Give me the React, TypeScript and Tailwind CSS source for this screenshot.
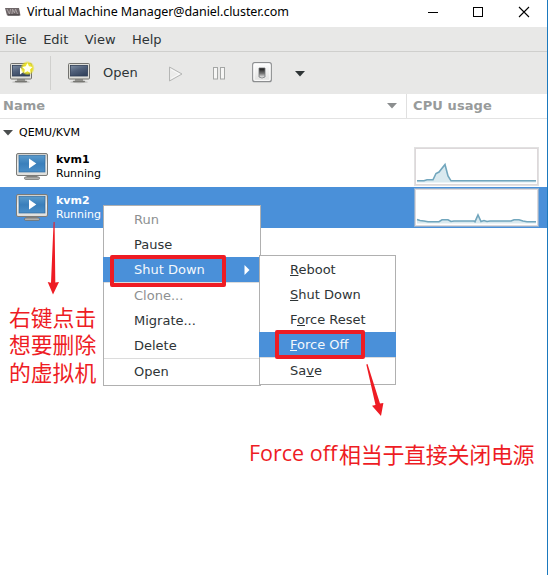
import type { ReactNode } from "react";

const VmIcon = () => (
  <svg width="34" height="28" viewBox="0 0 34 28" className="shrink-0">
    <defs>
      <linearGradient id="scr" x1="0" y1="0" x2="0" y2="1">
        <stop offset="0" stopColor="#5b9bcc" />
        <stop offset="0.5" stopColor="#3a7fbb" />
        <stop offset="1" stopColor="#4b8fc8" />
      </linearGradient>
      <linearGradient id="bezel" x1="0" y1="0" x2="0" y2="1">
        <stop offset="0" stopColor="#cfcfcc" />
        <stop offset="0.5" stopColor="#f1f1ef" />
        <stop offset="1" stopColor="#dededb" />
      </linearGradient>
    </defs>
    <path d="M12 22.5 H22 L23 24.5 H11 Z" fill="#8d8d89" />
    <rect x="9.5" y="24" width="15" height="2.4" rx="1.1" fill="#b8b8b4" stroke="#6b6b68" strokeWidth="0.8" />
    <rect x="1.5" y="0.5" width="31" height="22" rx="1.5" fill="url(#bezel)" stroke="#7b7b78" />
    <rect x="4" y="2.5" width="26" height="16.5" fill="url(#scr)" stroke="#2f6b9f" strokeWidth="0.7" />
    <path d="M14 5.5 L21.3 10.5 L14 15.5 Z" fill="#fff" />
  </svg>
);

const Monitor = ({ fresh = false }: { fresh?: boolean }) => (
  <svg width="26" height="24" viewBox="0 1 26 24" className="shrink-0">
    <defs>
      <linearGradient id="dark" x1="0" y1="0" x2="0.6" y2="1">
        <stop offset="0" stopColor="#8090a5" />
        <stop offset="0.5" stopColor="#50607a" />
        <stop offset="1" stopColor="#35455f" />
      </linearGradient>
      <radialGradient id="glow">
        <stop offset="0.3" stopColor="#f7ee24" />
        <stop offset="0.7" stopColor="#e9df24" stopOpacity="0.9" />
        <stop offset="1" stopColor="#e9e020" stopOpacity="0" />
      </radialGradient>
    </defs>
    <ellipse cx="12" cy="22" rx="9" ry="1.2" fill="#8f8f8b" opacity="0.45" />
    <path d="M8 19 H16 V21 H8 Z" fill="#9a9a96" />
    <rect x="6" y="20.7" width="12" height="1.6" rx="0.7" fill="#777773" />
    <rect x="1.5" y="3.5" width="21" height="15.5" rx="1" fill="#deded9" stroke="#72726f" />
    <rect x="3.5" y="5.5" width="17" height="10.5" fill="url(#dark)" stroke="#2d3c55" strokeWidth="0.8" />
    {fresh && (
      <>
        <path d="M11 7.5 L16 11 L11 14.5 Z" fill="#fff" />
        <circle cx="18.5" cy="8.2" r="7.3" fill="url(#glow)" />
        <path d="M18.4 3 L20 6.3 L23.6 6.9 L21 9.4 L21.6 13 L18.4 11.3 L15.2 13 L15.8 9.4 L13.2 6.9 L16.8 6.3 Z" fill="#fffff0" />
      </>
    )}
  </svg>
);

const CpuGraph = ({ line }: { line: string }) => (
  <svg width="125" height="39" viewBox="0 0 125 39" className="mt-px">
    <rect x="1" y="1" width="123" height="37" fill="#fff" stroke="#c9c9c9" strokeOpacity="0.55" strokeWidth="2" />
    <rect x="1.5" y="1.5" width="122" height="36" fill="#fff" stroke="#ddd8da" />
    <polygon points={`3,35.5 ${line} 122,35.5`} fill="#d9e9ef" />
    <polyline points={line} fill="none" stroke="#71a6bd" strokeWidth="1.6" />
  </svg>
);

const VmRow = ({ name, line, selected = false }: { name: string; line: string; selected?: boolean }) => (
  <div className={selected ? "flex h-[41px] bg-[#4a90d9] text-white" : "flex h-[41px] text-black"}>
    <div className="w-[56px] pl-[15px] pt-[7px]"><VmIcon /></div>
    <div className="flex w-[358px] flex-col pt-[7px] text-[11px] leading-[14px]">
      <b>{name}</b>
      <span>Running</span>
    </div>
    <CpuGraph line={line} />
  </div>
);

type ItemProps = { children: ReactNode; active?: boolean; disabled?: boolean; arrow?: boolean };
const Item = ({ children, active, disabled, arrow }: ItemProps) => (
  <div
    className={`-ml-px flex h-[25px] items-center justify-between pl-[31px] pr-[9px] ${
      active ? "bg-[#4a90d9] text-[#f4f8fc]" : disabled ? "text-[#8d9091]" : "text-[#2e3436]"
    }`}
  >
    <span>{children}</span>
    {arrow && (
      <svg width="6" height="10" viewBox="0 0 6 10"><path d="M0.5 0 L5.5 5 L0.5 10 Z" fill="#fff" /></svg>
    )}
  </div>
);
const Sep = () => <div className="h-px bg-[#dcdcdc]" />;
const U = ({ children }: { children: string }) => (
  <span className="underline decoration-1 underline-offset-1 [text-decoration-skip-ink:none]">{children}</span>
);

export default function App() {
  return (
    <div className="relative flex h-[575px] w-[548px] flex-col overflow-hidden border-r border-[#1b79be] bg-white font-['DejaVu_Sans',sans-serif] text-[13px] text-[#2e3436]">
      <header className="flex h-[27px] shrink-0 items-center pl-[5px] text-black">
        <svg width="16" height="10" viewBox="0 0 16 10" className="-mt-[4px]">
          <path d="M0 1 H14 L15.5 8.5 H2 Z" fill="#6e6668" />
          <path d="M2 2 L4.5 7 L5.5 2 M7 7 L7.5 2 L9.5 6 L10.5 2 L12.5 7" fill="none" stroke="#b1a9ab" strokeWidth="0.9" />
          <path d="M3 8 H14.5" stroke="#393536" />
        </svg>
        <h1 className="ml-[6px] mt-[-3px] w-[390px] whitespace-nowrap font-['Noto_Sans',sans-serif] text-[12.5px] tracking-[-0.07px]">
          Virtual Machine Manager@daniel.cluster.com
        </h1>
        <svg width="110" height="12" viewBox="0 0 110 12" className="mt-[-4px] ml-[11px]" fill="none" stroke="#000">
          <path d="M0 6.5 H10" />
          <rect x="45.5" y="1.5" width="9" height="9" />
          <path d="M91 1 L101 11 M101 1 L91 11" strokeWidth="1.1" />
        </svg>
      </header>
      <nav className="flex h-[25px] shrink-0 items-center gap-[16.4px] border-b border-[#cfcfcd] bg-[#e8e8e7] pl-[5px] pt-px">
        <span>File</span><span>Edit</span><span>View</span><span>Help</span>
      </nav>
      <div className="flex h-[42px] shrink-0 items-center bg-[#e8e8e7] pl-[9px]">
        <Monitor fresh />
        <div className="ml-[15px] h-[34px] w-px bg-[#d0d0ce]" />
        <div className="ml-[16px] h-6"><Monitor /></div>
        <span className="ml-[10px] w-[65px]">Open</span>
        <svg width="140" height="24" viewBox="168 61 140 24" fill="none">
          <defs>
            <linearGradient id="sw" x1="0" y1="0" x2="0" y2="1">
              <stop offset="0" stopColor="#111" /><stop offset="0.55" stopColor="#777" /><stop offset="1" stopColor="#fff" />
            </linearGradient>
            <linearGradient id="plate" x1="0" y1="0" x2="0" y2="1">
              <stop offset="0" stopColor="#fff" /><stop offset="1" stopColor="#dfdfde" />
            </linearGradient>
          </defs>
          <path d="M169.5 67 L182 74 L169.5 81 Z" fill="#ececeb" stroke="#b5b6b5" />
          <path d="M171 69.5 L179.5 74 L171 78.5" stroke="#fafafa" />
          <rect x="213.5" y="67.5" width="4" height="11.5" fill="#f6f6f5" stroke="#a4a6a5" />
          <rect x="220.5" y="67.5" width="4" height="11.5" fill="#f6f6f5" stroke="#a4a6a5" />
          <rect x="252.7" y="62.7" width="18.6" height="19" rx="2" fill="url(#plate)" stroke="#8c8e90" strokeWidth="1.2" />
          <rect x="254" y="64" width="16" height="16.3" rx="1" stroke="#fff" />
          <path d="M259 68 H265 V77 Q262 79 259 77 Z" fill="url(#sw)" stroke="#73777a" strokeWidth="0.8" />
          <path d="M295 71 H305 L300 76.5 Z" fill="#2e3436" />
        </svg>
      </div>
      <div className="flex h-[25px] shrink-0 border-b border-[#e3e3e3] font-bold text-[#989b9b]">
        <div className="flex w-[407px] items-center justify-between border-r border-[#e0e0e0] pl-[3px] pr-[9px]">
          <span>Name</span>
          <svg width="10" height="6" viewBox="0 0 10 6"><path d="M0 0 H10 L5 5.5 Z" fill="#8b8e8f" /></svg>
        </div>
        <span className="pl-[6px] leading-6 tracking-[0.1px]">CPU usage</span>
      </div>
      <div className="flex h-[27px] shrink-0 items-center gap-[6px] pl-[3px] pt-px text-[11px] text-black">
        <svg width="10" height="6" viewBox="0 0 10 6"><path d="M0 0 H10 L5 5.5 Z" fill="#4b4e4f" /></svg>
        <span>QEMU/KVM</span>
      </div>
      <VmRow name="kvm1" line="3,33.8 10,33.8 13,32.8 19,32.8 22,26.5 25,25 31,17.5 34,29 37,33.8 122,33.8" />
      <VmRow name="kvm2" selected line="3,31.5 6,32.5 10,33 14,33.7 25,33.7 28,31.8 34,31.8 37,33.5 40,33 60,33 61,33.7 64,27 67,33.5 70,32.5 73,33.5 76,33 97,33 100,31.7 105,31.7 109,33 113,33.7 122,33.7" />

      <div className="absolute left-[103px] top-[205px] h-[181px] w-[158px] border border-[#b0b0b0] bg-white pr-px pt-px">
        <Item disabled>Run</Item>
        <Item>Pause</Item>
        <Item active arrow>Shut Down</Item>
        <Sep />
        <Item disabled>Clone...</Item>
        <Item>Migrate...</Item>
        <Item>Delete</Item>
        <Sep />
        <Item>Open</Item>
      </div>
      <div className="absolute left-[259px] top-[255px] h-[130px] w-[137px] border border-[#b0b0b0] bg-white pt-px">
        <Item><U>R</U>eboot</Item>
        <Item><U>S</U>hut Down</Item>
        <Item>F<U>o</U>rce Reset</Item>
        <div className="-mr-px"><Item active><U>F</U>orce Off</Item></div>
        <Sep />
        <Item>Sa<U>v</U>e</Item>
      </div>

      <div className="absolute left-[110px] top-[255px] h-[32px] w-[116px] rounded-[2px] border-4 border-[#ee1c24]" />
      <div className="absolute left-[275px] top-[330px] h-[29px] w-[90px] rounded-[2px] border-4 border-[#ee1c24]" />
      <svg className="absolute left-0 top-0" width="548" height="575" fill="#ee1c24">
        <path d="M53.6 222 H54.6 L55.3 282.6 L59 282 L53 294.5 L47.7 282 L51 282.8 Z" />
        <path d="M366.3 364.5 L367.5 364 L380 403.5 L383.4 403 L381 416 L372 405.8 L375.5 405 Z" />
      </svg>
      <p className="absolute left-[9px] top-[305px] whitespace-nowrap font-['Liberation_Sans','Noto_Sans_CJK_SC',sans-serif] text-[21.8px] leading-[27.3px] text-[#ee1c24]">
        右键点击<br />想要删除<br />的虚拟机
      </p>
      <p className="absolute left-[249px] top-[439px] flex whitespace-nowrap text-[22px] leading-[28px] text-[#ee1c24]">
        <span className="w-[90px] font-['Open_Sans',sans-serif] text-[21.5px]">Force off</span>
        <span className="font-['Noto_Sans_CJK_SC',sans-serif] tracking-[-0.3px]">相当于直接关闭电源</span>
      </p>
    </div>
  );
}
